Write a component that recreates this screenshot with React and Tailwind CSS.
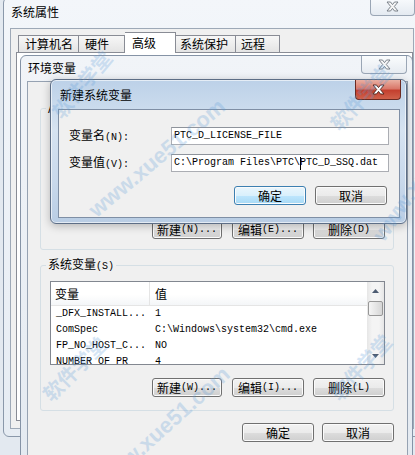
import React from 'react';

const M = ({ children }) => (
  <span className="font-['Liberation_Mono',monospace] text-[10px]">{children}</span>
);

const XGlyph = ({ red }) => (
  <svg width="13" height="11" viewBox="0 0 13 11">
    <path
      d="M1 1 H4.5 L6.5 3.6 L8.5 1 H12 L8.3 5.5 L12 10 H8.5 L6.5 7.4 L4.5 10 H1 L4.7 5.5 Z"
      fill={red ? '#ffffff' : '#f6f6f6'}
      stroke={red ? '#4a2018' : '#6f7780'}
      strokeWidth="0.9"
      strokeLinejoin="round"
    />
  </svg>
);

function Btn({ children, focus, className = '' }) {
  return (
    <div
      className={`flex items-center justify-center h-[19px] rounded-[3px] border shadow-[inset_0_0_0_1px_#fbfbfb] text-black whitespace-nowrap ${
        focus
          ? 'border-[#3c7fb1] bg-[linear-gradient(#eaf6fd_0%,#d9f0fc_50%,#bee6fd_51%,#a7d9f5_100%)]'
          : 'border-[#707070] bg-[linear-gradient(#f2f2f2_0%,#ebebeb_50%,#dddddd_51%,#cfcfcf_100%)]'
      } ${className}`}
    >
      {children}
    </div>
  );
}

const Arrow = ({ down }) => (
  <svg width="7" height="4" viewBox="0 0 7 4">
    <path d={down ? 'M0 0 H7 L3.5 4 Z' : 'M0 4 H7 L3.5 0 Z'} fill="#4d5c72" />
  </svg>
);

function Scrollbar() {
  return (
    <div className="w-[17px] flex flex-col bg-[linear-gradient(90deg,#e6e6e6,#f4f4f4_30%,#f4f4f4_70%,#e6e6e6)]">
      <div className="h-[17px] flex items-center justify-center">
        <Arrow />
      </div>
      <div className="mt-[2px] mx-[1px] h-[15px] rounded-[2px] border border-[#979797] bg-[linear-gradient(90deg,#f5f5f5,#e6e6e6_50%,#d6d6d6)]" />
      <div className="flex-1" />
      <div className="h-[17px] flex items-center justify-center">
        <Arrow down />
      </div>
    </div>
  );
}

const rows = [
  ['_DFX_INSTALL...', '1'],
  ['ComSpec', 'C:\\Windows\\system32\\cmd.exe'],
  ['FP_NO_HOST_C...', 'NO'],
  ['NUMBER_OF_PR', '4'],
];

function Group({ legend, children }) {
  return (
    <fieldset className="border border-[#d5dfe5] rounded-[3px] pl-[9px] pr-[8px] pt-[7px]">
      <legend className="ml-[-4px] px-[2px] leading-[14px]">{legend}</legend>
      {children}
    </fieldset>
  );
}

const Mark = ({ text, className }) => (
  <span
    className={`absolute origin-left whitespace-nowrap font-bold text-[#5d9bd8] opacity-[0.25] pointer-events-none ${className}`}
  >
    {text}
  </span>
);

export default function App() {
  return (
    <div className="relative w-[415px] h-[455px] overflow-hidden bg-[#e3e9f0] font-['Noto_Sans_CJK_SC','Noto_Sans',sans-serif] text-[12px] leading-[14px] text-black">
      {/* 系统属性 */}
      <div className="absolute left-[3px] top-[-3px] w-[418px] h-[440px] rounded-[6px] border border-[#8a98aa] bg-[linear-gradient(180deg,#f3f6fa,#e6ecf3)] flex flex-col px-[6px] pb-[7px]">
        <div className="h-[30px] pt-[7px] pl-[1px]">系统属性</div>
        <div className="absolute right-[5px] top-0 w-[45px] h-[18px] rounded-b-[4px] border border-t-0 border-[#9aa6b5] bg-[linear-gradient(#f9fbfd,#e4eaf1)] flex items-center justify-center">
          <XGlyph />
        </div>
        <div className="flex-1 border border-[#9ea9b7] bg-[#f0f0f0] pl-[5px] pt-[4px] pb-[7px] flex flex-col">
          <div className="flex items-end h-[19px] ml-[2px]">
            <div className="h-[17px] w-[61px] border border-b-0 border-[#898c95] bg-[linear-gradient(#f7f7f7,#e4e4e4)] pl-[6px] flex items-center">计算机名</div>
            <div className="h-[17px] w-[46px] border border-b-0 border-l-0 border-[#898c95] bg-[linear-gradient(#f7f7f7,#e4e4e4)] pl-[6px] flex items-center">硬件</div>
            <div className="relative z-10 -mb-px h-[21px] w-[51px] border border-b-0 border-l-0 border-[#898c95] bg-white pl-[7px] flex items-center">高级</div>
            <div className="h-[17px] w-[60px] border border-b-0 border-l-0 border-[#898c95] bg-[linear-gradient(#f7f7f7,#e4e4e4)] pl-[4px] flex items-center">系统保护</div>
            <div className="h-[17px] w-[44px] border border-b-0 border-l-0 border-[#898c95] bg-[linear-gradient(#f7f7f7,#e4e4e4)] pl-[5px] flex items-center">远程</div>
          </div>
          <div className="flex-1 border border-[#898c95] bg-white" />
        </div>
      </div>

      {/* 环境变量 */}
      <div className="absolute left-[20px] top-[55px] w-[393px] h-[410px] rounded-t-[6px] border border-[#8593a6] bg-[linear-gradient(180deg,#f1f4f8,#e4eaf1)] flex flex-col pl-[6px] pr-[4px]">
        <div className="h-[25px] pt-[5px] pl-[1px]">环境变量</div>
        <div className="absolute right-[5px] top-0 w-[46px] h-[18px] rounded-b-[4px] border border-t-0 border-[#9aa6b5] bg-[linear-gradient(#fafcfd,#e6ebf1)] flex items-center justify-center">
          <XGlyph />
        </div>
        <div className="flex-1 border border-[#96a2b2] bg-[#f0f0f0] pl-[12px] pr-[13px] pt-[19px]">
          <Group legend="Administrator 的用户变量(U)">
            <div className="h-[89px] border border-[#828790] bg-white" />
            <div className="mt-[9px] mb-[10px] flex justify-end">
              <Btn className="w-[70px]">新建<M>(N)...</M></Btn>
              <Btn className="w-[72px] ml-[10px]">编辑<M>(E)...</M></Btn>
              <Btn className="w-[72px] ml-[9px]">删除<M>(D)</M></Btn>
            </div>
          </Group>
          <div className="mt-[7px]">
            <Group legend={<>系统变量<M>(S)</M></>}>
              <div className="h-[84px] border border-[#828790] bg-white flex overflow-hidden">
                <div className="flex-1 flex flex-col">
                  <div className="h-[24px] shrink-0 flex border-b border-[#e5e5e5] bg-[linear-gradient(#ffffff,#ffffff_55%,#f4f6f8)]">
                    <div className="w-[99px] pl-[4px] flex items-center border-r border-[#e5e5e5]">变量</div>
                    <div className="pl-[5px] flex items-center">值</div>
                  </div>
                  {rows.map(([k, v]) => (
                    <div key={k} className="h-[16px] shrink-0 flex items-center font-['Liberation_Mono',monospace] text-[10px]">
                      <div className="w-[100px] pl-[5px] whitespace-nowrap overflow-hidden">{k}</div>
                      <div className="pl-[4px] whitespace-nowrap">{v}</div>
                    </div>
                  ))}
                </div>
                <Scrollbar />
              </div>
              <div className="mt-[13px] mb-[13px] flex justify-end">
                <Btn className="w-[70px]">新建<M>(W)...</M></Btn>
                <Btn className="w-[72px] ml-[10px]">编辑<M>(I)...</M></Btn>
                <Btn className="w-[72px] ml-[9px]">删除<M>(L)</M></Btn>
              </div>
            </Group>
          </div>
          <div className="mt-[12px] flex justify-end">
            <Btn className="w-[72px]">确定</Btn>
            <Btn className="w-[72px] ml-[8px]">取消</Btn>
          </div>
        </div>
      </div>

      {/* 新建系统变量 */}
      <div className="absolute left-[50px] top-[79px] w-[357px] h-[145px] rounded-[6px] border border-[#5d6e86] bg-[linear-gradient(180deg,#bcd1e8_0%,#d6e3f1_35%,#c9d9ec_70%,#b9cde4_100%)] shadow-[inset_0_0_0_1px_rgba(255,255,255,0.6),0_2px_8px_rgba(0,0,0,0.25)] flex flex-col pl-[7px] pr-[6px] pb-[5px]">
        <div className="h-[29px] pt-[8px] pl-[2px]">新建系统变量</div>
        <div className="absolute right-[5px] top-0 w-[46px] h-[20px] rounded-b-[4px] border border-t-0 border-[#6b2a22] bg-[linear-gradient(#eab0a2_0%,#d9786a_45%,#c4402f_55%,#d0614a_100%)] flex items-center justify-center">
          <XGlyph red />
        </div>
        <div className="flex-1 border border-[#7f8fa5] bg-[#f0f0f0] pl-[10px] pt-[17px]">
          <div className="flex items-center">
            <div className="w-[102px]">变量名<M>(N):</M></div>
            <div className="w-[218px] h-[18px] border border-[#abadb3] border-t-[#8e939b] bg-white pl-[2px] flex items-center">
              <M>PTC_D_LICENSE_FILE</M>
            </div>
          </div>
          <div className="mt-[9px] flex items-center">
            <div className="w-[102px]">变量值<M>(V):</M></div>
            <div className="w-[218px] h-[18px] border border-[#abadb3] border-t-[#8e939b] bg-white pl-[2px] flex items-center whitespace-nowrap">
              <M>C:\Program Files\PTC\</M>
              <span className="inline-block w-px h-[13px] bg-black -mr-px" />
              <M>PTC_D_SSQ.dat</M>
            </div>
          </div>
          <div className="mt-[14px] w-[318px] flex justify-end">
            <Btn focus className="w-[72px]">确定</Btn>
            <Btn className="w-[72px] ml-[9px]">取消</Btn>
          </div>
        </div>
      </div>

      {/* watermarks */}
      <Mark text="软件学堂" className="left-[56px] top-[108px] text-[20px] rotate-[-50deg]" />
      <Mark text="www.xue51.com" className="left-[92px] top-[206px] text-[22px] rotate-[-40deg] font-['Liberation_Sans',sans-serif]" />
      <Mark text="软件学堂" className="left-[334px] top-[120px] text-[20px] rotate-[-48deg]" />
      <Mark text="www.xue51.com" className="left-[378px] top-[232px] text-[22px] rotate-[-55deg] font-['Liberation_Sans',sans-serif]" />
      <Mark text="软件学堂" className="left-[46px] top-[390px] text-[20px] rotate-[-45deg]" />
      <Mark text="www.xue51.com" className="left-[100px] top-[478px] text-[22px] rotate-[-42deg] font-['Liberation_Sans',sans-serif]" />
      <Mark text="软件学堂" className="left-[334px] top-[390px] text-[20px] rotate-[-48deg]" />
    </div>
  );
}
